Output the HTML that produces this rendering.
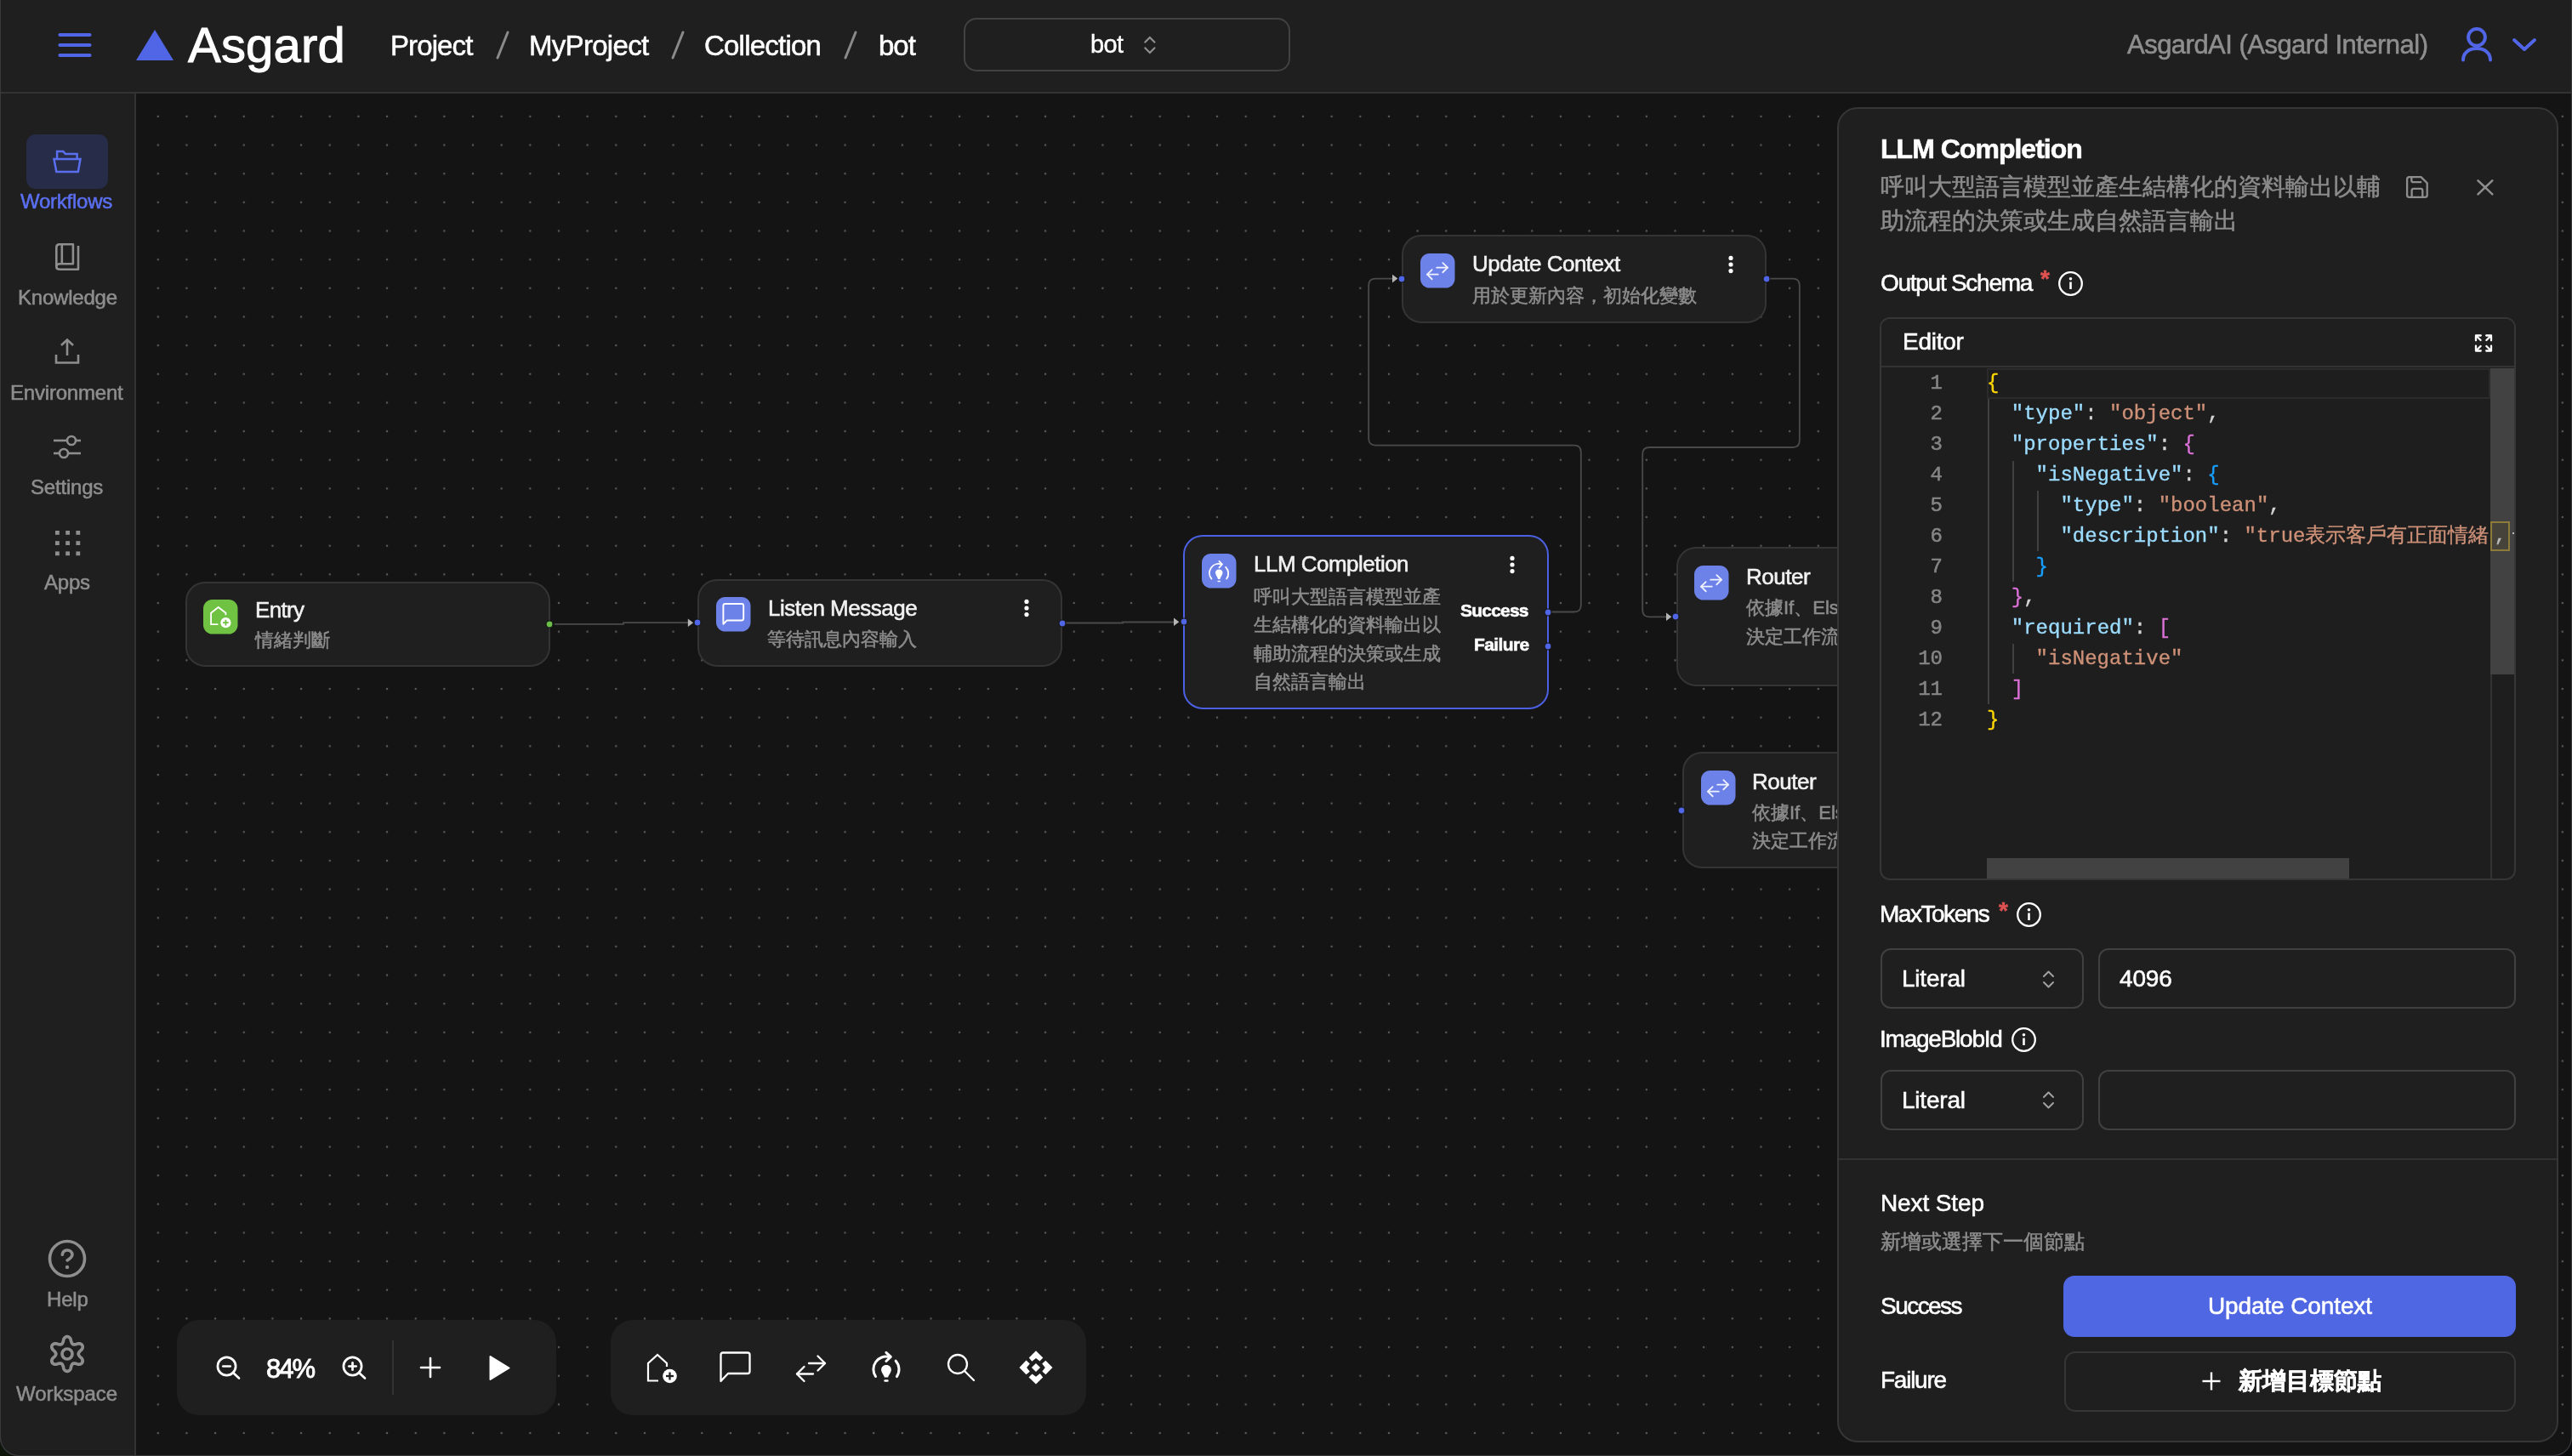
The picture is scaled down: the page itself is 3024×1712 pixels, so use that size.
<!DOCTYPE html>
<html><head><meta charset="utf-8"><title>Asgard</title>
<style>
html,body{margin:0;padding:0;width:3024px;height:1712px;overflow:hidden;background:#141414;}
body{font-family:"Liberation Sans",sans-serif;position:relative;}
.t{position:absolute;white-space:nowrap;-webkit-text-stroke:0.55px currentColor;will-change:transform;}
.b{position:absolute;box-sizing:border-box;}
.s{position:absolute;overflow:visible;}
@media (max-width:1700px){html{zoom:0.5;}}
</style></head><body>
<svg class="s" style="left:0;top:0" width="3024" height="1712"><defs><pattern id="dots" x="168.973" y="120.073" width="33.655" height="33.655" patternUnits="userSpaceOnUse"><circle cx="16.828" cy="16.828" r="1.25" fill="#5a5a5a"/></pattern></defs><rect x="160" y="110" width="2864" height="1602" fill="url(#dots)"/></svg>
<div class="b" style="left:0px;top:0px;width:3024px;height:110px;background:#1f1f1f;border-bottom:2px solid #333;border-left:1px solid #3a3a3a;"></div>
<svg class="s" style="left:68px;top:37px;" width="40" height="32" viewBox="0 0 40 32"><g stroke="#5066e6" stroke-width="4.2" stroke-linecap="round"><line x1="2.5" y1="4" x2="37.5" y2="4"/><line x1="2.5" y1="16" x2="37.5" y2="16"/><line x1="2.5" y1="28" x2="37.5" y2="28"/></g></svg>
<svg class="s" style="left:160px;top:35px;" width="44" height="36" viewBox="0 0 44 36"><polygon points="0,36 22,0 44,36" fill="#5066e6"/></svg>
<div class="t" style="left:221.0px;top:24.4px;font-size:58px;line-height:58px;color:#fff;letter-spacing:0.2px;-webkit-text-stroke:1px #fff;">Asgard</div>
<div class="t" style="left:459.0px;top:36.5px;font-size:33px;line-height:33px;color:#fff;letter-spacing:-0.9px;-webkit-text-stroke:0.55px #fff;">Project</div>
<div class="t" style="left:622.0px;top:36.5px;font-size:33px;line-height:33px;color:#fff;letter-spacing:-0.7px;-webkit-text-stroke:0.55px #fff;">MyProject</div>
<div class="t" style="left:828.0px;top:36.5px;font-size:33px;line-height:33px;color:#fff;letter-spacing:-0.78px;-webkit-text-stroke:0.55px #fff;">Collection</div>
<div class="t" style="left:1033.0px;top:36.5px;font-size:33px;line-height:33px;color:#fff;letter-spacing:-1.0px;-webkit-text-stroke:0.55px #fff;">bot</div>
<svg class="s" style="left:582.5px;top:36px;" width="16" height="34" viewBox="0 0 16 34"><line x1="2" y1="32" x2="14" y2="2" stroke="#8a8a8a" stroke-width="3" stroke-linecap="round"/></svg>
<svg class="s" style="left:789px;top:36px;" width="16" height="34" viewBox="0 0 16 34"><line x1="2" y1="32" x2="14" y2="2" stroke="#8a8a8a" stroke-width="3" stroke-linecap="round"/></svg>
<svg class="s" style="left:992px;top:36px;" width="16" height="34" viewBox="0 0 16 34"><line x1="2" y1="32" x2="14" y2="2" stroke="#8a8a8a" stroke-width="3" stroke-linecap="round"/></svg>
<div class="b" style="left:1133px;top:21px;width:384px;height:63px;border:2px solid #424242;border-radius:15px;"></div>
<div class="t" style="left:1282.0px;top:38.4px;font-size:29px;line-height:29px;color:#fff;letter-spacing:-0.6px;-webkit-text-stroke:0.4px #fff;">bot</div>
<svg class="s" style="left:1343px;top:42px;" width="18" height="22" viewBox="0 0 18 22"><g fill="none" stroke="#8f8f8f" stroke-width="2.2" stroke-linecap="round" stroke-linejoin="miter"><polyline points="3.4,7.6 8.9,2 14.4,7.6"/><polyline points="3.4,14.4 8.9,20 14.4,14.4"/></g></svg>
<div class="t" style="left:2501.0px;top:36.7px;font-size:31px;line-height:31px;color:#8f8f8f;letter-spacing:-0.52px;">AsgardAI (Asgard Internal)</div>
<svg class="s" style="left:2893px;top:31px;" width="40" height="44" viewBox="0 0 40 44"><g fill="none" stroke="#5066e6" stroke-width="4" stroke-linecap="round"><circle cx="19" cy="12.8" r="9.9"/><path d="M3,39.5 C3,31.5 9.5,26 19,26 C28.5,26 35,31.5 35,39.5"/></g></svg>
<svg class="s" style="left:2953px;top:44px;" width="30" height="18" viewBox="0 0 30 18"><polyline points="3,3 15,14 27,3" fill="none" stroke="#5066e6" stroke-width="4" stroke-linecap="round" stroke-linejoin="round"/></svg>
<div class="b" style="left:0px;top:110px;width:160px;height:1602px;background:#1f1f1f;border-right:2px solid #333;border-left:1px solid #3a3a3a;"></div>
<div class="b" style="left:31px;top:158px;width:96px;height:64px;background:#272c48;border-radius:11px;"></div>
<svg class="s" style="left:61px;top:175px;" width="36" height="30" viewBox="0 0 36 30"><g fill="none" stroke="#5a6ff0" stroke-width="2.5" stroke-linejoin="miter"><path d="M6.1,11.5 V3.1 H13.3 L16,6 H29.6 V11.5"/><path d="M2.5,12 H33.5 L30.8,27 H5.3 Z"/></g></svg>
<div class="t" style="left:24.0px;top:225.1px;font-size:24px;line-height:24px;color:#5a6ff0;letter-spacing:-0.24px;">Workflows</div>
<svg class="s" style="left:63px;top:284px;" width="34" height="36" viewBox="0 0 34 36"><g fill="none" stroke="#8e8e8e" stroke-width="2.6" stroke-linejoin="round"><path d="M3.3,29.5 V7 Q3.3,3.2 7,3.2 H22.9 V26.2 H7.3 Q3.3,26.2 3.3,29.5 Q3.3,32.8 7.3,32.8 H29 V5.1"/><line x1="9.8" y1="3.2" x2="9.8" y2="26.2"/></g></svg>
<div class="t" style="left:20.6px;top:337.7px;font-size:24px;line-height:24px;color:#8e8e8e;letter-spacing:-0.22px;">Knowledge</div>
<svg class="s" style="left:63px;top:398px;" width="32" height="32" viewBox="0 0 32 32"><g fill="none" stroke="#8e8e8e" stroke-width="2.6"><polyline points="9,8 16,1.5 23,8"/><line x1="16" y1="2" x2="16" y2="20"/><polyline points="3,19 3,28.5 29,28.5 29,19"/></g></svg>
<div class="t" style="left:12.0px;top:449.7px;font-size:24px;line-height:24px;color:#8e8e8e;letter-spacing:-0.2px;">Environment</div>
<svg class="s" style="left:62px;top:510px;" width="36" height="32" viewBox="0 0 36 32"><g fill="none" stroke="#8e8e8e" stroke-width="2.6"><line x1="1" y1="8" x2="33" y2="8"/><line x1="1" y1="23" x2="33" y2="23"/><circle cx="22" cy="8" r="5" fill="#1f1f1f"/><circle cx="13" cy="23" r="5" fill="#1f1f1f"/></g></svg>
<div class="t" style="left:36.0px;top:561.1px;font-size:24px;line-height:24px;color:#8e8e8e;letter-spacing:-0.2px;">Settings</div>
<svg class="s" style="left:64px;top:623px;" width="30" height="30" viewBox="0 0 30 30"><g fill="#8e8e8e"><rect x="1.0" y="1.0" width="4.8" height="4.8"/><rect x="1.0" y="13.2" width="4.8" height="4.8"/><rect x="1.0" y="25.4" width="4.8" height="4.8"/><rect x="13.2" y="1.0" width="4.8" height="4.8"/><rect x="13.2" y="13.2" width="4.8" height="4.8"/><rect x="13.2" y="25.4" width="4.8" height="4.8"/><rect x="25.4" y="1.0" width="4.8" height="4.8"/><rect x="25.4" y="13.2" width="4.8" height="4.8"/><rect x="25.4" y="25.4" width="4.8" height="4.8"/></g></svg>
<div class="t" style="left:52.0px;top:672.7px;font-size:24px;line-height:24px;color:#8e8e8e;letter-spacing:-0.2px;">Apps</div>
<svg class="s" style="left:55px;top:1456px;" width="48" height="48" viewBox="0 0 48 48"><g fill="none" stroke="#8e8e8e" stroke-width="3.6" stroke-linecap="round"><circle cx="24" cy="24" r="20.5"/><path d="M18.3,19.2 C18.8,15.8 21.2,14 24,14 C27.5,14 29.9,16.3 29.9,19.3 C29.9,22.6 26.6,24.4 24.1,25.9"/></g><circle cx="24" cy="33.9" r="2.2" fill="#8e8e8e"/></svg>
<div class="t" style="left:55.0px;top:1515.7px;font-size:24px;line-height:24px;color:#8e8e8e;letter-spacing:-0.2px;">Help</div>
<svg class="s" style="left:57px;top:1570px;" width="44" height="44" viewBox="0 0 44 44"><g fill="none" stroke="#8e8e8e" stroke-width="3.7" stroke-linejoin="round"><polygon points="35.20,22.00 35.21,22.23 35.25,22.46 35.31,22.70 35.40,22.94 35.52,23.18 35.65,23.44 35.81,23.70 36.00,23.97 36.21,24.25 36.44,24.55 36.69,24.86 36.97,25.18 37.29,25.53 37.66,25.90 38.23,26.35 38.79,26.81 39.13,27.24 39.40,27.65 39.62,28.07 39.80,28.48 39.94,28.89 40.05,29.29 40.12,29.69 40.15,30.08 40.16,30.47 40.12,30.84 40.06,31.20 39.96,31.55 39.83,31.88 39.67,32.20 39.47,32.50 39.25,32.78 39.00,33.04 38.72,33.28 38.41,33.49 38.08,33.68 37.72,33.84 37.34,33.98 36.93,34.09 36.51,34.17 36.06,34.22 35.59,34.24 35.10,34.21 34.56,34.13 33.88,33.88 33.21,33.61 32.70,33.48 32.24,33.38 31.82,33.30 31.42,33.23 31.05,33.18 30.70,33.14 30.38,33.12 30.07,33.11 29.78,33.11 29.51,33.14 29.26,33.18 29.03,33.24 28.81,33.33 28.60,33.43 28.41,33.56 28.22,33.71 28.05,33.88 27.89,34.08 27.73,34.30 27.58,34.54 27.44,34.81 27.30,35.11 27.15,35.43 27.01,35.78 26.87,36.15 26.73,36.56 26.59,37.01 26.45,37.51 26.35,38.23 26.22,38.94 26.03,39.45 25.80,39.89 25.56,40.29 25.29,40.65 25.01,40.98 24.71,41.27 24.40,41.53 24.08,41.76 23.75,41.96 23.41,42.11 23.06,42.24 22.71,42.33 22.36,42.38 22.00,42.40 21.64,42.38 21.29,42.33 20.94,42.24 20.59,42.11 20.25,41.96 19.92,41.76 19.60,41.53 19.29,41.27 18.99,40.98 18.71,40.65 18.44,40.29 18.20,39.89 17.97,39.45 17.78,38.94 17.65,38.23 17.55,37.51 17.41,37.01 17.27,36.56 17.13,36.15 16.99,35.78 16.85,35.43 16.70,35.11 16.56,34.81 16.42,34.54 16.27,34.30 16.11,34.08 15.95,33.88 15.78,33.71 15.59,33.56 15.40,33.43 15.19,33.33 14.97,33.24 14.74,33.18 14.49,33.14 14.22,33.11 13.93,33.11 13.62,33.12 13.30,33.14 12.95,33.18 12.58,33.23 12.18,33.30 11.76,33.38 11.30,33.48 10.79,33.61 10.12,33.88 9.44,34.13 8.90,34.21 8.41,34.24 7.94,34.22 7.49,34.17 7.07,34.09 6.66,33.98 6.28,33.84 5.92,33.68 5.59,33.49 5.28,33.28 5.00,33.04 4.75,32.78 4.53,32.50 4.33,32.20 4.17,31.88 4.04,31.55 3.94,31.20 3.88,30.84 3.84,30.47 3.85,30.08 3.88,29.69 3.95,29.29 4.06,28.89 4.20,28.48 4.38,28.07 4.60,27.65 4.87,27.24 5.21,26.81 5.77,26.35 6.34,25.90 6.71,25.53 7.03,25.18 7.31,24.86 7.56,24.55 7.79,24.25 8.00,23.97 8.19,23.70 8.35,23.44 8.48,23.18 8.60,22.94 8.69,22.70 8.75,22.46 8.79,22.23 8.80,22.00 8.79,21.77 8.75,21.54 8.69,21.30 8.60,21.06 8.48,20.82 8.35,20.56 8.19,20.30 8.00,20.03 7.79,19.75 7.56,19.45 7.31,19.14 7.03,18.82 6.71,18.47 6.34,18.10 5.77,17.65 5.21,17.19 4.87,16.76 4.60,16.35 4.38,15.93 4.20,15.52 4.06,15.11 3.95,14.71 3.88,14.31 3.85,13.92 3.84,13.53 3.88,13.16 3.94,12.80 4.04,12.45 4.17,12.12 4.33,11.80 4.53,11.50 4.75,11.22 5.00,10.96 5.28,10.72 5.59,10.51 5.92,10.32 6.28,10.16 6.66,10.02 7.07,9.91 7.49,9.83 7.94,9.78 8.41,9.76 8.90,9.79 9.44,9.87 10.12,10.12 10.79,10.39 11.30,10.52 11.76,10.62 12.18,10.70 12.58,10.77 12.95,10.82 13.30,10.86 13.62,10.88 13.93,10.89 14.22,10.89 14.49,10.86 14.74,10.82 14.97,10.76 15.19,10.67 15.40,10.57 15.59,10.44 15.78,10.29 15.95,10.12 16.11,9.92 16.27,9.70 16.42,9.46 16.56,9.19 16.70,8.89 16.85,8.57 16.99,8.22 17.13,7.85 17.27,7.44 17.41,6.99 17.55,6.49 17.65,5.77 17.78,5.06 17.97,4.55 18.20,4.11 18.44,3.71 18.71,3.35 18.99,3.02 19.29,2.73 19.60,2.47 19.92,2.24 20.25,2.04 20.59,1.89 20.94,1.76 21.29,1.67 21.64,1.62 22.00,1.60 22.36,1.62 22.71,1.67 23.06,1.76 23.41,1.89 23.75,2.04 24.08,2.24 24.40,2.47 24.71,2.73 25.01,3.02 25.29,3.35 25.56,3.71 25.80,4.11 26.03,4.55 26.22,5.06 26.35,5.77 26.45,6.49 26.59,6.99 26.73,7.44 26.87,7.85 27.01,8.22 27.15,8.57 27.30,8.89 27.44,9.19 27.58,9.46 27.73,9.70 27.89,9.92 28.05,10.12 28.22,10.29 28.41,10.44 28.60,10.57 28.81,10.67 29.03,10.76 29.26,10.82 29.51,10.86 29.78,10.89 30.07,10.89 30.38,10.88 30.70,10.86 31.05,10.82 31.42,10.77 31.82,10.70 32.24,10.62 32.70,10.52 33.21,10.39 33.88,10.12 34.56,9.87 35.10,9.79 35.59,9.76 36.06,9.78 36.51,9.83 36.93,9.91 37.34,10.02 37.72,10.16 38.08,10.32 38.41,10.51 38.72,10.72 39.00,10.96 39.25,11.22 39.47,11.50 39.67,11.80 39.83,12.12 39.96,12.45 40.06,12.80 40.12,13.16 40.16,13.53 40.15,13.92 40.12,14.31 40.05,14.71 39.94,15.11 39.80,15.52 39.62,15.93 39.40,16.35 39.13,16.76 38.79,17.19 38.23,17.65 37.66,18.10 37.29,18.47 36.97,18.82 36.69,19.14 36.44,19.45 36.21,19.75 36.00,20.03 35.81,20.30 35.65,20.56 35.52,20.82 35.40,21.06 35.31,21.30 35.25,21.54 35.21,21.77"/><circle cx="22" cy="22" r="6"/></g></svg>
<div class="t" style="left:19.0px;top:1626.7px;font-size:24px;line-height:24px;color:#8e8e8e;letter-spacing:-0.06px;">Workspace</div>
<svg class="s" style="left:0;top:0" width="3024" height="1712"><path d="M651.8,733.8 H733 V732.2 H809" fill="none" stroke="#4a4a4a" stroke-width="1.8"/><path d="M1253,732.5 H1320 V731.5 H1380.5" fill="none" stroke="#4a4a4a" stroke-width="1.8"/><path d="M1824,719.5 H1850.8 Q1858.8,719.5 1858.8,711.5 V531.6 Q1858.8,523.6 1850.8,523.6 H1617.2 Q1609.2,523.6 1609.2,515.6 V335.6 Q1609.2,327.6 1617.2,327.6 H1637.5" fill="none" stroke="#4a4a4a" stroke-width="1.8"/><path d="M2081,327.6 H2107.8 Q2115.8,327.6 2115.8,335.6 V518 Q2115.8,526 2107.8,526 H1939.2 Q1931.2,526 1931.2,534 V717.3 Q1931.2,725.3 1939.2,725.3 H1959.5" fill="none" stroke="#4a4a4a" stroke-width="1.8"/><polygon points="808.8,727.4000000000001 815.0999999999999,732.2 808.8,737.0" fill="#b5b5b5"/><polygon points="1380,726.5 1386.3,731.3 1380,736.0999999999999" fill="#b5b5b5"/><polygon points="1637,322.8 1643.3,327.6 1637,332.40000000000003" fill="#b5b5b5"/><polygon points="1959,720.5 1965.3,725.3 1959,730.0999999999999" fill="#b5b5b5"/></svg>
<div class="b" style="left:217.5px;top:684px;width:429px;height:100px;background:#1f1f1f;border:2px solid #343434;border-radius:23px;"></div>
<svg class="s" style="left:239px;top:705px" width="40.5" height="40.5" viewBox="0 0 40 40"><rect x="0" y="0" width="40" height="40" rx="10.5" fill="#70c242"/><g fill="none" stroke="#fff" stroke-width="1.8" stroke-linejoin="miter"><polyline points="17.2,28.8 9,28.8 9,15.5 17.5,8.8 26.1,15.5 26.1,18"/></g><circle cx="26.1" cy="26.8" r="6" fill="#fff"/><g stroke="#70c242" stroke-width="1.8"><line x1="22.8" y1="26.8" x2="29.4" y2="26.8"/><line x1="26.1" y1="23.5" x2="26.1" y2="30.1"/></g></svg>
<div class="t" style="left:300.0px;top:704.0px;font-size:26px;line-height:26px;color:#f2f2f2;letter-spacing:-0.69px;">Entry</div>
<div class="t" style="left:300.0px;top:741.6px;font-size:22px;line-height:22px;color:#8c8c8c;">情緒判斷</div>
<svg class="s" style="left:640.3px;top:727.8px" width="12" height="12"><circle cx="6" cy="6" r="4" fill="#6cc04a" stroke="#161616" stroke-width="1.2"/></svg>
<div class="b" style="left:820px;top:680.5px;width:429px;height:103.5px;background:#1f1f1f;border:2px solid #343434;border-radius:23px;"></div>
<svg class="s" style="left:841.5px;top:702px" width="40.5" height="40.5" viewBox="0 0 40 40"><rect x="0" y="0" width="40" height="40" rx="10.5" fill="#6d82e8"/><path d="M8.3,31.4 V10 Q8.3,7.9 10.4,7.9 H29.7 Q31.8,7.9 31.8,10 V25 Q31.8,27.1 29.7,27.1 H12.6 Z" fill="none" stroke="#fff" stroke-width="1.9" stroke-linejoin="round"/></svg>
<div class="t" style="left:902.5px;top:701.7px;font-size:26px;line-height:26px;color:#f2f2f2;letter-spacing:-0.5px;">Listen Message</div>
<div class="t" style="left:902.0px;top:740.6px;font-size:22px;line-height:22px;color:#8c8c8c;">等待訊息內容輸入</div>
<svg class="s" style="left:1203px;top:703.5px" width="8" height="24"><g fill="#fff"><circle cx="4" cy="3.4" r="2.6"/><circle cx="4" cy="11" r="2.6"/><circle cx="4" cy="18.6" r="2.6"/></g></svg>
<svg class="s" style="left:813.5px;top:726.2px" width="12" height="12"><circle cx="6" cy="6" r="4" fill="#5066e6" stroke="#161616" stroke-width="1.2"/></svg>
<svg class="s" style="left:1243px;top:726.5px" width="12" height="12"><circle cx="6" cy="6" r="4" fill="#5066e6" stroke="#161616" stroke-width="1.2"/></svg>
<div class="b" style="left:1391px;top:628.5px;width:430px;height:205.5px;background:#1f1f1f;border:2.3px solid #4b60e2;border-radius:23px;"></div>
<svg class="s" style="left:1413px;top:650.5px" width="40.5" height="40.5" viewBox="0 0 40 40"><rect x="0" y="0" width="40" height="40" rx="10.5" fill="#6d82e8"/><g fill="none" stroke="#fff" stroke-width="1.8" stroke-linecap="round"><path d="M11.3,29.2 A10.6,10.6 0 0 1 22.8,12.4"/><polyline points="20.2,8.8 23.6,12.4 20.2,16.2"/><path d="M27.8,15.6 A10.6,10.6 0 0 1 28.8,29.2"/></g><path d="M20,18.3 C23,18.3 24.2,20.3 24.2,22.3 C24.2,24.8 21.6,27 21.2,29.6 H18.8 C18.4,27 15.8,24.8 15.8,22.3 C15.8,20.3 17,18.3 20,18.3 Z" fill="#fff"/><line x1="18.9" y1="32" x2="21.1" y2="32" stroke="#fff" stroke-width="1.5" stroke-linecap="round"/></svg>
<div class="t" style="left:1474.0px;top:650.0px;font-size:26px;line-height:26px;color:#f2f2f2;letter-spacing:-0.52px;">LLM Completion</div>
<div class="t" style="left:1474.0px;top:690.6px;font-size:22px;line-height:22px;color:#8c8c8c;">呼叫大型語言模型並產</div>
<div class="t" style="left:1474.0px;top:724.2px;font-size:22px;line-height:22px;color:#8c8c8c;">生結構化的資料輸出以</div>
<div class="t" style="left:1474.0px;top:757.8px;font-size:22px;line-height:22px;color:#8c8c8c;">輔助流程的決策或生成</div>
<div class="t" style="left:1474.0px;top:791.4px;font-size:22px;line-height:22px;color:#8c8c8c;">自然語言輸出</div>
<div class="t" style="left:1717.0px;top:707.2px;font-size:21px;line-height:21px;color:#fff;font-weight:700;letter-spacing:-0.78px;">Success</div>
<div class="t" style="left:1733.0px;top:747.2px;font-size:21px;line-height:21px;color:#fff;font-weight:700;letter-spacing:-0.62px;">Failure</div>
<svg class="s" style="left:1774px;top:652.5px" width="8" height="24"><g fill="#fff"><circle cx="4" cy="3.4" r="2.6"/><circle cx="4" cy="11" r="2.6"/><circle cx="4" cy="18.6" r="2.6"/></g></svg>
<svg class="s" style="left:1385.7px;top:725.2px" width="12" height="12"><circle cx="6" cy="6" r="4" fill="#5066e6" stroke="#161616" stroke-width="1.2"/></svg>
<svg class="s" style="left:1814.3px;top:713.5px" width="12" height="12"><circle cx="6" cy="6" r="4" fill="#5066e6" stroke="#161616" stroke-width="1.2"/></svg>
<svg class="s" style="left:1814.3px;top:753.6px" width="12" height="12"><circle cx="6" cy="6" r="4" fill="#5066e6" stroke="#161616" stroke-width="1.2"/></svg>
<div class="b" style="left:1648px;top:276px;width:429px;height:103.5px;background:#1f1f1f;border:2px solid #343434;border-radius:23px;"></div>
<svg class="s" style="left:1670.2px;top:297.5px" width="40.5" height="40.5" viewBox="0 0 40 40"><rect x="0" y="0" width="40" height="40" rx="10.5" fill="#6d82e8"/><g fill="none" stroke="#f0f2ff" stroke-width="1.8" stroke-linecap="round" stroke-linejoin="round"><line x1="19" y1="16.5" x2="31.6" y2="16.5"/><polyline points="26,11 31.6,16.5 26,22"/><line x1="7.9" y1="24.4" x2="20.5" y2="24.4"/><polyline points="13.5,18.9 7.9,24.4 13.5,29.9"/></g></svg>
<div class="t" style="left:1731.0px;top:297.0px;font-size:26px;line-height:26px;color:#f2f2f2;letter-spacing:-0.49px;">Update Context</div>
<div class="t" style="left:1731.0px;top:336.6px;font-size:22px;line-height:22px;color:#8c8c8c;">用於更新內容，初始化變數</div>
<svg class="s" style="left:2031px;top:300px" width="8" height="24"><g fill="#fff"><circle cx="4" cy="3.4" r="2.6"/><circle cx="4" cy="11" r="2.6"/><circle cx="4" cy="18.6" r="2.6"/></g></svg>
<svg class="s" style="left:1641.6px;top:321.6px" width="12" height="12"><circle cx="6" cy="6" r="4" fill="#5066e6" stroke="#161616" stroke-width="1.2"/></svg>
<svg class="s" style="left:2071px;top:321.6px" width="12" height="12"><circle cx="6" cy="6" r="4" fill="#5066e6" stroke="#161616" stroke-width="1.2"/></svg>
<div class="b" style="left:1970.5px;top:643px;width:429px;height:164px;background:#1f1f1f;border:2px solid #343434;border-radius:23px;"></div>
<svg class="s" style="left:1992px;top:664.7px" width="40.5" height="40.5" viewBox="0 0 40 40"><rect x="0" y="0" width="40" height="40" rx="10.5" fill="#6d82e8"/><g fill="none" stroke="#f0f2ff" stroke-width="1.8" stroke-linecap="round" stroke-linejoin="round"><line x1="19" y1="16.5" x2="31.6" y2="16.5"/><polyline points="26,11 31.6,16.5 26,22"/><line x1="7.9" y1="24.4" x2="20.5" y2="24.4"/><polyline points="13.5,18.9 7.9,24.4 13.5,29.9"/></g></svg>
<div class="t" style="left:2053.0px;top:665.0px;font-size:26px;line-height:26px;color:#f2f2f2;letter-spacing:-0.46px;">Router</div>
<div class="t" style="left:2053.0px;top:703.6px;font-size:22px;line-height:22px;color:#8c8c8c;">依據If、Else條件判斷</div>
<div class="t" style="left:2053.0px;top:737.6px;font-size:22px;line-height:22px;color:#8c8c8c;">決定工作流程走向</div>
<svg class="s" style="left:1964.3px;top:719.3px" width="12" height="12"><circle cx="6" cy="6" r="4" fill="#5066e6" stroke="#161616" stroke-width="1.2"/></svg>
<div class="b" style="left:1978px;top:884px;width:429px;height:137px;background:#1f1f1f;border:2px solid #343434;border-radius:23px;"></div>
<svg class="s" style="left:1999.5px;top:905.6px" width="40.5" height="40.5" viewBox="0 0 40 40"><rect x="0" y="0" width="40" height="40" rx="10.5" fill="#6d82e8"/><g fill="none" stroke="#f0f2ff" stroke-width="1.8" stroke-linecap="round" stroke-linejoin="round"><line x1="19" y1="16.5" x2="31.6" y2="16.5"/><polyline points="26,11 31.6,16.5 26,22"/><line x1="7.9" y1="24.4" x2="20.5" y2="24.4"/><polyline points="13.5,18.9 7.9,24.4 13.5,29.9"/></g></svg>
<div class="t" style="left:2060.0px;top:906.0px;font-size:26px;line-height:26px;color:#f2f2f2;letter-spacing:-0.46px;">Router</div>
<div class="t" style="left:2060.0px;top:944.6px;font-size:22px;line-height:22px;color:#8c8c8c;">依據If、Else條件判斷</div>
<div class="t" style="left:2060.0px;top:978.3px;font-size:22px;line-height:22px;color:#8c8c8c;">決定工作流程走向</div>
<svg class="s" style="left:1971.3px;top:946.6px" width="12" height="12"><circle cx="6" cy="6" r="4" fill="#5066e6" stroke="#161616" stroke-width="1.2"/></svg>
<div class="b" style="left:208px;top:1552px;width:446px;height:112px;background:#1f1f1f;border-radius:26px;"></div>
<svg class="s" style="left:252px;top:1592px;" width="34" height="34" viewBox="0 0 34 34"><g fill="none" stroke="#fff" stroke-width="2.7" stroke-linecap="round"><circle cx="14.5" cy="14.5" r="10.6"/><line x1="22" y1="22" x2="29" y2="28.5"/><line x1="10.3" y1="14.5" x2="18.7" y2="14.5"/></g></svg>
<div class="t" style="left:313.0px;top:1593.7px;font-size:31px;line-height:31px;color:#fff;letter-spacing:-2px;-webkit-text-stroke:0.9px #fff;">84%</div>
<svg class="s" style="left:400px;top:1592px;" width="34" height="34" viewBox="0 0 34 34"><g fill="none" stroke="#fff" stroke-width="2.7" stroke-linecap="round"><circle cx="14.5" cy="14.5" r="10.6"/><line x1="22" y1="22" x2="29" y2="28.5"/><line x1="10.3" y1="14.5" x2="18.7" y2="14.5"/><line x1="14.5" y1="10.3" x2="14.5" y2="18.7"/></g></svg>
<div class="b" style="left:460.5px;top:1576px;width:2px;height:64px;background:#333;"></div>
<svg class="s" style="left:493px;top:1595px;" width="26" height="26" viewBox="0 0 26 26"><g stroke="#fff" stroke-width="2.6" stroke-linecap="round"><line x1="2" y1="13" x2="24" y2="13"/><line x1="13" y1="2" x2="13" y2="24"/></g></svg>
<svg class="s" style="left:574px;top:1593px;" width="28" height="32" viewBox="0 0 28 32"><polygon points="2.5,2 24.5,15.5 2.5,29" fill="#fff" stroke="#fff" stroke-width="2" stroke-linejoin="round"/></svg>
<div class="b" style="left:718px;top:1552px;width:559px;height:112px;background:#1f1f1f;border-radius:26px;"></div>
<svg class="s" style="left:760px;top:1588px;" width="40" height="40" viewBox="0 0 40 40"><g fill="none" stroke="#fff" stroke-width="2.2"><polyline points="14,35.5 2,35.5 2,15 13,5 24,15 24,19"/></g><circle cx="27.5" cy="30" r="8.3" fill="#fff"/><g stroke="#1f1f1f" stroke-width="2.3"><line x1="23" y1="30" x2="32" y2="30"/><line x1="27.5" y1="25.5" x2="27.5" y2="34.5"/></g></svg>
<svg class="s" style="left:845px;top:1588px;" width="40" height="40" viewBox="0 0 40 40"><path d="M2.5,36 V5 Q2.5,2.5 5,2.5 H34 Q36.5,2.5 36.5,5 V24.5 Q36.5,27 34,27 H11 Z" fill="none" stroke="#fff" stroke-width="2.3" stroke-linejoin="round"/></svg>
<svg class="s" style="left:934px;top:1592px;" width="40" height="34" viewBox="0 0 40 34"><g fill="none" stroke="#fff" stroke-width="2.3" stroke-linecap="round" stroke-linejoin="round"><line x1="17" y1="11" x2="36" y2="11"/><polyline points="27.5,2.5 36,11 27.5,19.5"/><line x1="3" y1="23.5" x2="22" y2="23.5"/><polyline points="11.5,15 3,23.5 11.5,32"/></g></svg>
<svg class="s" style="left:1018px;top:1582px;" width="50" height="50" viewBox="0 0 50 50"><g fill="none" stroke="#fff" stroke-width="3" stroke-linecap="round" stroke-linejoin="round"><path d="M11.5,36.5 A15,15 0 0 1 27.5,13.5"/><polyline points="23.9,8.3 29.3,13.4 23.9,18.5"/><path d="M35.2,18.2 A15,15 0 0 1 36.4,36.6"/></g><path d="M24,23 C27.8,23 29.9,25.5 29.9,28.6 C29.9,32.2 26.8,34.5 26.2,37.6 H21.8 C21.2,34.5 18.1,32.2 18.1,28.6 C18.1,25.5 20.2,23 24,23 Z" fill="#fff"/><line x1="22.6" y1="41.5" x2="25.4" y2="41.5" stroke="#fff" stroke-width="2.6" stroke-linecap="round"/></svg>
<svg class="s" style="left:1112px;top:1590px;" width="36" height="36" viewBox="0 0 36 36"><g fill="none" stroke="#fff" stroke-width="2.3" stroke-linecap="round"><circle cx="14" cy="14" r="11"/><line x1="22" y1="22" x2="33" y2="33"/></g></svg>
<svg class="s" style="left:1190px;top:1580px;" width="56" height="56" viewBox="0 0 56 56"><g fill="#fff"><polygon points="28,8.3 36.3,16.5 32.5,20.6 28,17.1 23.3,20.8 19.8,16.5"/><polygon points="47.5,27.9 39.4,19.8 35.2,23.5 38.8,27.9 35.4,32.5 39.4,36.3"/><polygon points="8.5,27.9 16.5,19.6 20.8,23.5 17.1,27.9 20.8,32.7 16.5,36.2"/><polygon points="28,47.5 19.6,39.4 23.5,35.4 28,38.8 32.7,35 36.2,39.4"/><polygon points="28,22.9 33.1,27.9 28,33.1 22.9,27.9"/></g></svg>
<div class="b" style="left:2160px;top:126px;width:848px;height:1570px;background:#1f1f1f;border:2px solid #363636;border-radius:24px;overflow:hidden;"></div>
<div class="t" style="left:2211.0px;top:159.2px;font-size:32px;line-height:32px;color:#fff;font-weight:700;letter-spacing:-0.98px;">LLM Completion</div>
<div class="t" style="left:2211.0px;top:206.0px;font-size:28px;line-height:28px;color:#8c8c8c;">呼叫大型語言模型並產生結構化的資料輸出以輔</div>
<div class="t" style="left:2211.0px;top:245.5px;font-size:28px;line-height:28px;color:#8c8c8c;">助流程的決策或生成自然語言輸出</div>
<svg class="s" style="left:2826px;top:205px;" width="32" height="30" viewBox="0 0 32 30"><g fill="none" stroke="#8e8e8e" stroke-width="2.3" stroke-linejoin="round" stroke-linecap="round"><path d="M4.1,5.8 Q4.1,3.1 6.8,3.1 H20.5 L27.7,10.3 V24.2 Q27.7,26.9 25,26.9 H6.8 Q4.1,26.9 4.1,24.2 Z"/><path d="M9.3,3.4 V7 Q9.3,9.2 11.5,9.2 H20.2"/><path d="M9.6,26.6 V19.2 Q9.6,16.9 11.9,16.9 H20.1 Q22.3,16.9 22.3,19.2 V26.6"/></g></svg>
<svg class="s" style="left:2910px;top:210px;" width="23" height="21" viewBox="0 0 23 21"><g stroke="#8e8e8e" stroke-width="2.5" stroke-linecap="round"><line x1="3.5" y1="2.3" x2="20.3" y2="18.3"/><line x1="20.3" y1="2.3" x2="3.5" y2="18.3"/></g></svg>
<div class="t" style="left:2210.5px;top:319.0px;font-size:28px;line-height:28px;color:#fff;letter-spacing:-1.27px;">Output Schema</div>
<div class="t" style="left:2399.0px;top:314.3px;font-size:28px;line-height:28px;color:#e05252;font-weight:700;">*</div>
<svg class="s" style="left:2419px;top:318px;" width="31" height="31" viewBox="0 0 31 31"><g fill="none" stroke="#fff" stroke-width="2.3"><circle cx="15.5" cy="15.5" r="13.3"/></g><circle cx="15.5" cy="9.8" r="1.8" fill="#fff"/><line x1="15.5" y1="13.5" x2="15.5" y2="22" stroke="#fff" stroke-width="2.6"/></svg>
<div class="b" style="left:2210px;top:373px;width:748px;height:662px;border:2px solid #363636;border-radius:12px;background:#1e1e1e;overflow:hidden;"></div>
<div class="b" style="left:2212px;top:375px;width:744px;height:57px;background:#1f1f1f;border-bottom:2px solid #333;border-radius:10px 10px 0 0;"></div>
<div class="t" style="left:2237.0px;top:388.3px;font-size:28px;line-height:28px;color:#fff;letter-spacing:-0.25px;">Editor</div>
<svg class="s" style="left:2908px;top:392px;" width="24" height="23" viewBox="0 0 24 23"><g fill="none" stroke="#fff" stroke-width="2.3" stroke-linecap="round" stroke-linejoin="round"><polyline points="3,8.3 3,2.5 8.8,2.5"/><line x1="3.5" y1="3" x2="8.6" y2="8"/><polyline points="15.2,2.5 21,2.5 21,8.3"/><line x1="20.5" y1="3" x2="15.4" y2="8"/><polyline points="3,14.7 3,20.5 8.8,20.5"/><line x1="3.5" y1="20" x2="8.6" y2="15"/><polyline points="15.2,20.5 21,20.5 21,14.7"/><line x1="20.5" y1="20" x2="15.4" y2="15"/></g></svg>
<div class="b" style="left:2336px;top:433px;width:592px;height:36px;border:2px solid #2b2b2b;"></div>
<div class="b" style="left:2337.4px;top:469px;width:1.5px;height:358.5px;background:#404040;"></div>
<div class="b" style="left:2366px;top:541.6px;width:1.5px;height:142.19999999999993px;background:#404040;"></div>
<div class="b" style="left:2395px;top:577px;width:1.5px;height:71px;background:#404040;"></div>
<div class="b" style="left:2366px;top:757.4px;width:1.5px;height:34.60000000000002px;background:#404040;"></div>
<div class="b" style="left:2928px;top:433px;width:28px;height:360px;background:#424242;"></div>
<div class="b" style="left:2928px;top:433px;width:1.5px;height:600px;background:#333;"></div>
<div class="b" style="left:2336px;top:1009px;width:426px;height:24px;background:#424242;"></div>
<div class="t" style="left:2222.0px;top:439.2px;font-size:24px;line-height:24px;color:#858585;width:62px;text-align:right;font-family:'Liberation Mono',monospace;">1</div>
<div class="t" style="left:2335.5px;top:439.2px;font-size:24px;line-height:24px;color:#d4d4d4;font-family:'Liberation Mono',monospace;white-space:pre;-webkit-text-stroke:0.35px currentColor;"><span style="color:#ffd700">{</span></div>
<div class="t" style="left:2222.0px;top:475.2px;font-size:24px;line-height:24px;color:#858585;width:62px;text-align:right;font-family:'Liberation Mono',monospace;">2</div>
<div class="t" style="left:2335.5px;top:475.2px;font-size:24px;line-height:24px;color:#d4d4d4;font-family:'Liberation Mono',monospace;white-space:pre;-webkit-text-stroke:0.35px currentColor;">  <span style="color:#9cdcfe">&quot;type&quot;</span><span style="color:#d4d4d4">: </span><span style="color:#ce9178">&quot;object&quot;</span><span style="color:#d4d4d4">,</span></div>
<div class="t" style="left:2222.0px;top:511.2px;font-size:24px;line-height:24px;color:#858585;width:62px;text-align:right;font-family:'Liberation Mono',monospace;">3</div>
<div class="t" style="left:2335.5px;top:511.2px;font-size:24px;line-height:24px;color:#d4d4d4;font-family:'Liberation Mono',monospace;white-space:pre;-webkit-text-stroke:0.35px currentColor;">  <span style="color:#9cdcfe">&quot;properties&quot;</span><span style="color:#d4d4d4">: </span><span style="color:#da70d6">{</span></div>
<div class="t" style="left:2222.0px;top:547.2px;font-size:24px;line-height:24px;color:#858585;width:62px;text-align:right;font-family:'Liberation Mono',monospace;">4</div>
<div class="t" style="left:2335.5px;top:547.2px;font-size:24px;line-height:24px;color:#d4d4d4;font-family:'Liberation Mono',monospace;white-space:pre;-webkit-text-stroke:0.35px currentColor;">    <span style="color:#9cdcfe">&quot;isNegative&quot;</span><span style="color:#d4d4d4">: </span><span style="color:#179fff">{</span></div>
<div class="t" style="left:2222.0px;top:583.2px;font-size:24px;line-height:24px;color:#858585;width:62px;text-align:right;font-family:'Liberation Mono',monospace;">5</div>
<div class="t" style="left:2335.5px;top:583.2px;font-size:24px;line-height:24px;color:#d4d4d4;font-family:'Liberation Mono',monospace;white-space:pre;-webkit-text-stroke:0.35px currentColor;">      <span style="color:#9cdcfe">&quot;type&quot;</span><span style="color:#d4d4d4">: </span><span style="color:#ce9178">&quot;boolean&quot;</span><span style="color:#d4d4d4">,</span></div>
<div class="t" style="left:2222.0px;top:619.2px;font-size:24px;line-height:24px;color:#858585;width:62px;text-align:right;font-family:'Liberation Mono',monospace;">6</div>
<div class="t" style="left:2335.5px;top:619.2px;font-size:24px;line-height:24px;color:#d4d4d4;font-family:'Liberation Mono',monospace;white-space:pre;-webkit-text-stroke:0.35px currentColor;">      <span style="color:#9cdcfe">&quot;description&quot;</span><span style="color:#d4d4d4">: </span><span style="color:#ce9178">&quot;true表示客戶有正面情緒</span></div>
<div class="t" style="left:2222.0px;top:655.2px;font-size:24px;line-height:24px;color:#858585;width:62px;text-align:right;font-family:'Liberation Mono',monospace;">7</div>
<div class="t" style="left:2335.5px;top:655.2px;font-size:24px;line-height:24px;color:#d4d4d4;font-family:'Liberation Mono',monospace;white-space:pre;-webkit-text-stroke:0.35px currentColor;">    <span style="color:#179fff">}</span></div>
<div class="t" style="left:2222.0px;top:691.2px;font-size:24px;line-height:24px;color:#858585;width:62px;text-align:right;font-family:'Liberation Mono',monospace;">8</div>
<div class="t" style="left:2335.5px;top:691.2px;font-size:24px;line-height:24px;color:#d4d4d4;font-family:'Liberation Mono',monospace;white-space:pre;-webkit-text-stroke:0.35px currentColor;">  <span style="color:#da70d6">}</span><span style="color:#d4d4d4">,</span></div>
<div class="t" style="left:2222.0px;top:727.2px;font-size:24px;line-height:24px;color:#858585;width:62px;text-align:right;font-family:'Liberation Mono',monospace;">9</div>
<div class="t" style="left:2335.5px;top:727.2px;font-size:24px;line-height:24px;color:#d4d4d4;font-family:'Liberation Mono',monospace;white-space:pre;-webkit-text-stroke:0.35px currentColor;">  <span style="color:#9cdcfe">&quot;required&quot;</span><span style="color:#d4d4d4">: </span><span style="color:#da70d6">[</span></div>
<div class="t" style="left:2222.0px;top:763.2px;font-size:24px;line-height:24px;color:#858585;width:62px;text-align:right;font-family:'Liberation Mono',monospace;">10</div>
<div class="t" style="left:2335.5px;top:763.2px;font-size:24px;line-height:24px;color:#d4d4d4;font-family:'Liberation Mono',monospace;white-space:pre;-webkit-text-stroke:0.35px currentColor;">    <span style="color:#ce9178">&quot;isNegative&quot;</span></div>
<div class="t" style="left:2222.0px;top:799.2px;font-size:24px;line-height:24px;color:#858585;width:62px;text-align:right;font-family:'Liberation Mono',monospace;">11</div>
<div class="t" style="left:2335.5px;top:799.2px;font-size:24px;line-height:24px;color:#d4d4d4;font-family:'Liberation Mono',monospace;white-space:pre;-webkit-text-stroke:0.35px currentColor;">  <span style="color:#da70d6">]</span></div>
<div class="t" style="left:2222.0px;top:835.2px;font-size:24px;line-height:24px;color:#858585;width:62px;text-align:right;font-family:'Liberation Mono',monospace;">12</div>
<div class="t" style="left:2335.5px;top:835.2px;font-size:24px;line-height:24px;color:#d4d4d4;font-family:'Liberation Mono',monospace;white-space:pre;-webkit-text-stroke:0.35px currentColor;"><span style="color:#ffd700">}</span></div>
<div class="b" style="left:2928px;top:433px;width:28px;height:360px;background:#424242;"></div>
<div class="b" style="left:2928px;top:613px;width:23px;height:35px;border:2px solid #8d7b3c;background:#46443a;"></div>
<div class="t" style="left:2933.0px;top:620.4px;font-size:22px;line-height:22px;color:#bbb;font-family:'Liberation Mono',monospace;">,</div>
<div class="b" style="left:2953.5px;top:625.5px;width:2px;height:2px;background:#bbb;"></div>
<div class="t" style="left:2210.0px;top:1061.3px;font-size:28px;line-height:28px;color:#fff;letter-spacing:-1.47px;">MaxTokens</div>
<div class="t" style="left:2350.0px;top:1057.3px;font-size:28px;line-height:28px;color:#e05252;font-weight:700;">*</div>
<svg class="s" style="left:2370px;top:1060px;" width="31" height="31" viewBox="0 0 31 31"><g fill="none" stroke="#fff" stroke-width="2.3"><circle cx="15.5" cy="15.5" r="13.3"/></g><circle cx="15.5" cy="9.8" r="1.8" fill="#fff"/><line x1="15.5" y1="13.5" x2="15.5" y2="22" stroke="#fff" stroke-width="2.6"/></svg>
<div class="b" style="left:2210.5px;top:1115px;width:239px;height:71px;border:2px solid #404040;border-radius:12px;"></div>
<div class="t" style="left:2236.4px;top:1137.3px;font-size:28px;line-height:28px;color:#fff;letter-spacing:-0.21px;">Literal</div>
<svg class="s" style="left:2400.5px;top:1140.5px;" width="15" height="21" viewBox="0 0 15 21"><g fill="none" stroke="#a0a0a0" stroke-width="2" stroke-linecap="round" stroke-linejoin="round"><polyline points="2,7 7.5,1.5 13,7"/><polyline points="2,14 7.5,19.5 13,14"/></g></svg>
<div class="b" style="left:2466.5px;top:1115px;width:491px;height:71px;border:2px solid #404040;border-radius:12px;"></div>
<div class="t" style="left:2491.8px;top:1137.3px;font-size:28px;line-height:28px;color:#fff;letter-spacing:-0.15px;">4096</div>
<div class="t" style="left:2210.0px;top:1208.3px;font-size:28px;line-height:28px;color:#fff;letter-spacing:-1.23px;">ImageBlobId</div>
<svg class="s" style="left:2364px;top:1207px;" width="31" height="31" viewBox="0 0 31 31"><g fill="none" stroke="#fff" stroke-width="2.3"><circle cx="15.5" cy="15.5" r="13.3"/></g><circle cx="15.5" cy="9.8" r="1.8" fill="#fff"/><line x1="15.5" y1="13.5" x2="15.5" y2="22" stroke="#fff" stroke-width="2.6"/></svg>
<div class="b" style="left:2210.5px;top:1258px;width:239px;height:71px;border:2px solid #404040;border-radius:12px;"></div>
<div class="t" style="left:2236.4px;top:1279.9px;font-size:28px;line-height:28px;color:#fff;letter-spacing:-0.21px;">Literal</div>
<svg class="s" style="left:2400.5px;top:1283px;" width="15" height="21" viewBox="0 0 15 21"><g fill="none" stroke="#a0a0a0" stroke-width="2" stroke-linecap="round" stroke-linejoin="round"><polyline points="2,7 7.5,1.5 13,7"/><polyline points="2,14 7.5,19.5 13,14"/></g></svg>
<div class="b" style="left:2466.5px;top:1258px;width:491px;height:71px;border:2px solid #404040;border-radius:12px;"></div>
<div class="b" style="left:2162px;top:1362px;width:844px;height:2px;background:#333;"></div>
<div class="t" style="left:2210.5px;top:1401.3px;font-size:28px;line-height:28px;color:#fff;letter-spacing:-0.12px;">Next Step</div>
<div class="t" style="left:2210.5px;top:1447.8px;font-size:24px;line-height:24px;color:#8c8c8c;">新增或選擇下一個節點</div>
<div class="t" style="left:2210.5px;top:1521.9px;font-size:28px;line-height:28px;color:#fff;letter-spacing:-1.54px;">Success</div>
<div class="b" style="left:2426px;top:1500px;width:532px;height:72px;background:#5067e4;border-radius:13px;"></div>
<div class="t" style="left:2595.8px;top:1521.9px;font-size:28px;line-height:28px;color:#fff;letter-spacing:-0.12px;">Update Context</div>
<div class="t" style="left:2210.5px;top:1609.3px;font-size:28px;line-height:28px;color:#fff;letter-spacing:-1.25px;">Failure</div>
<div class="b" style="left:2427px;top:1588.5px;width:531px;height:71px;border:2px solid #363636;border-radius:13px;"></div>
<svg class="s" style="left:2588px;top:1612px;" width="24" height="24" viewBox="0 0 24 24"><g stroke="#fff" stroke-width="2.4"><line x1="1.5" y1="12" x2="22.5" y2="12"/><line x1="12" y1="1.5" x2="12" y2="22.5"/></g></svg>
<div class="t" style="left:2632.0px;top:1609.6px;font-size:28px;line-height:28px;color:#fff;font-weight:700;">新增目標節點</div>
<div class="b" style="left:0px;top:0px;width:3024px;height:1712px;border:1px solid #3a3a3a;border-top:none;border-radius:0 0 20px 20px;pointer-events:none;"></div>
<svg class="s" style="left:0;top:0" width="3024" height="1712"><path d="M0,1690 A22,22 0 0 0 22,1712 L0,1712 Z" fill="#0f170c"/><path d="M3024,1690 A22,22 0 0 1 3002,1712 L3024,1712 Z" fill="#080a0c"/><path d="M0.5,1690 A21.5,21.5 0 0 0 22,1711.5" fill="none" stroke="#3a3a3f" stroke-width="1.2"/><path d="M3023.5,1690 A21.5,21.5 0 0 1 3002,1711.5" fill="none" stroke="#3a3a3f" stroke-width="1.2"/></svg>
</body></html>
